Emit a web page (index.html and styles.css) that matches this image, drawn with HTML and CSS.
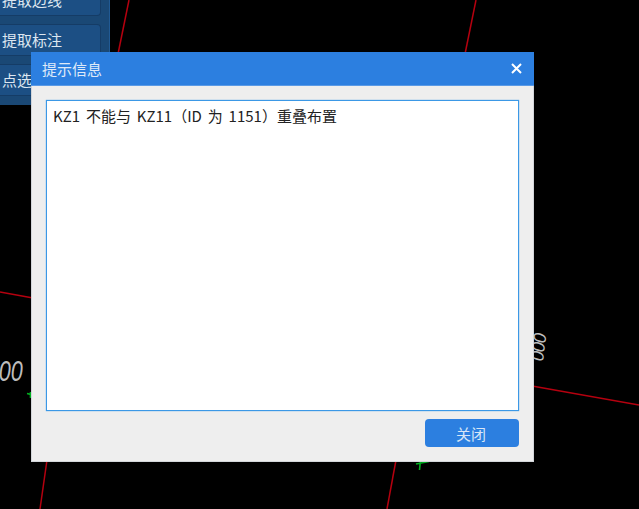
FILE: index.html
```html
<!DOCTYPE html>
<html lang="zh">
<head>
<meta charset="utf-8">
<title>提示信息</title>
<link rel="stylesheet" href="styles.css">
</head>
<body>
<main class="canvas">
  <svg class="drawing" width="639" height="509" viewBox="0 0 639 509" aria-hidden="true">
    <g class="red">
      <path d="M129 0L118 54"/>
      <path d="M476 0L465 54"/>
      <path d="M47 460L40 509"/>
      <path d="M396 460L387 509"/>
      <path d="M0 292L33 298"/>
      <path d="M532 386L639 405"/>
    </g>
    <g class="green">
      <path d="M27 393.500L33 395M30.500 392V398"/>
      <path d="M420.500 460L419.500 470M416 464L429 461.500"/>
    </g>
  </svg>
  <span class="dim dim-left">00</span>
  <span class="dim dim-right">000</span>

  <nav class="panel">
    <button class="tool">提取边线</button>
    <button class="tool">提取标注</button>
    <button class="tool">点选</button>
  </nav>

  <section class="dialog">
    <header class="dialog-head">
      <h1 class="dialog-title">提示信息</h1>
      <svg class="close" width="11" height="11" viewBox="0 0 11 11" aria-label="关闭"><path d="M1 1L10 10M10 1L1 10"/></svg>
    </header>
    <div class="dialog-body">
      <div class="message">KZ1 不能与 KZ11（ID 为 1151）重叠布置</div>
      <div class="actions"><button class="primary">关闭</button></div>
    </div>
  </section>
</main>
</body>
</html>
```
FILE: styles.css
```css
* { box-sizing: border-box; }
html, body { margin: 0; height: 100%; background: #000; overflow: hidden; }
body { font-family: "Noto Sans CJK SC", "Liberation Sans", sans-serif; }
.canvas { position: relative; width: 639px; height: 509px; background: #000; overflow: hidden; }
.drawing { position: absolute; left: 0; top: 0; }
.red path { stroke: #b5000f; stroke-width: 1.5; fill: none; }
.green path { stroke: #00b020; stroke-width: 1.6; fill: none; }
.dim { position: absolute; color: #bdbdbd; font-family: "Liberation Sans", sans-serif; font-style: italic; }
.dim-left { left: -6px; top: 354px; font-size: 30px; line-height: 34px; transform: scaleX(.72); }
.dim-right { left: 525px; top: 336px; font-size: 18px; line-height: 20px; transform: rotate(97deg); letter-spacing: -1px; }
.panel { position: absolute; left: 0; top: -20px; width: 110px; height: 125px; background: #1a4875; border-right: 1px solid #215a94; display: flex; flex-direction: column; gap: 8px; padding: 4px 8px 0 0; }
.tool { height: 32px; flex: none; padding: 0 0 1px 2px; background: #1c4f84; border: 1px solid #153c66; border-left: 0; border-radius: 0 4px 4px 0; color: #dce6f0; font: 15px/1 "Noto Sans CJK SC", sans-serif; text-align: left; }
.dialog { position: absolute; left: 31px; top: 52px; width: 503px; height: 410px; display: flex; flex-direction: column; background: #eeeeee; border: 1px solid #d3d6da; border-top: 0; }
.dialog-head { height: 34px; margin: 0 -1px; flex: none; display: flex; align-items: center; justify-content: space-between; padding: 0 12px 0 11px; background: #2c7fe0; border-bottom: 1px solid #5a9ae6; }
.dialog-title { margin: 0; font-size: 15px; font-weight: 400; color: #dfeaf8; }
.close path { stroke: #fff; stroke-width: 2; fill: none; }
.dialog-body { flex: 1; display: flex; flex-direction: column; padding: 14px; }
.message { height: 311px; padding: 4px 6px; background: #fff; border: 1px solid #3b98e6; box-shadow: 0 0 1px #3b98e6; color: #222; font-size: 15px; line-height: 22px; word-spacing: 2.5px; }
.actions { display: flex; justify-content: flex-end; margin-top: 8px; }
.primary { width: 94px; height: 28px; padding: 0 2px 0 0; border: 0; border-radius: 4px; background: #2c7fe0; color: #d8e6f7; font: 15px/1 "Noto Sans CJK SC", sans-serif; }
```
